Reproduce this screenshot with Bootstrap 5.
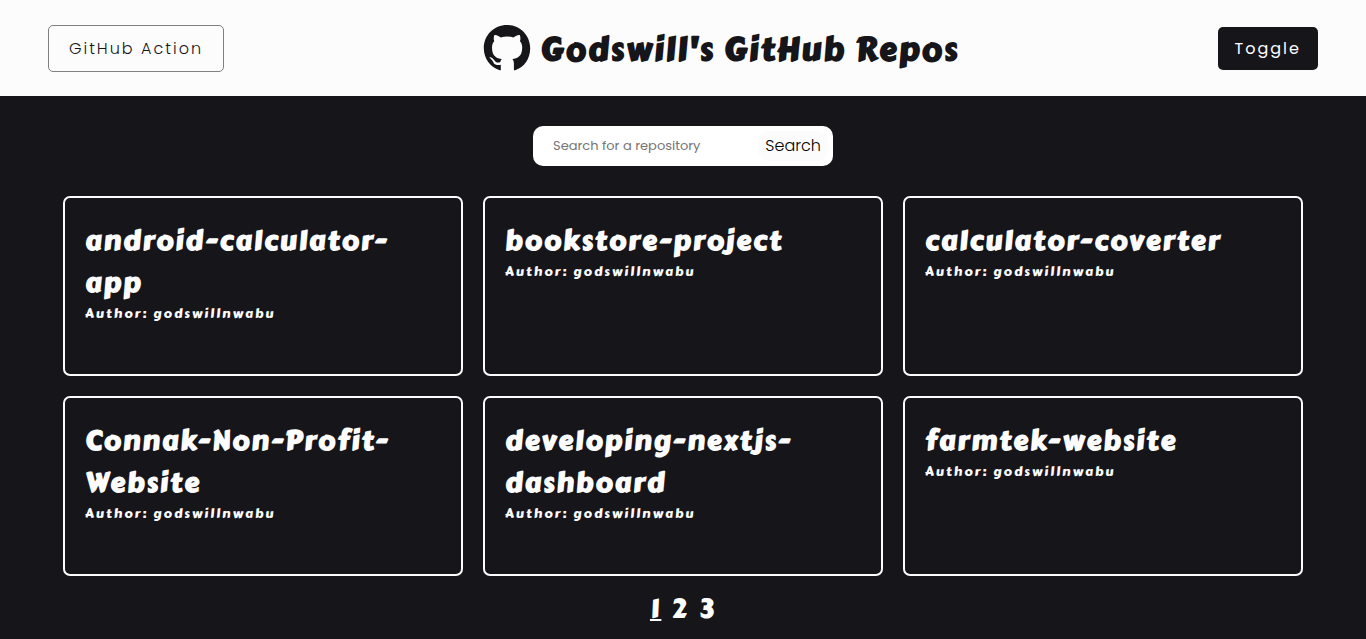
<!DOCTYPE html>
<html lang="en">
<head>
<meta charset="utf-8">
<meta name="viewport" content="width=device-width, initial-scale=1">
<title>Godswill's GitHub Repos</title>
<link href="https://cdn.jsdelivr.net/npm/bootstrap@5.3.0/dist/css/bootstrap.min.css" rel="stylesheet">
<style>
  :root { --ink: #16151a; --paper: #fcfcfc; --display: "Carter One", Lato, sans-serif; --text: Poppins, Inter, sans-serif; }
  body { background: var(--ink); color: var(--paper); font-family: var(--text); font-weight: 300; }
  .site-header { background: var(--paper); color: var(--ink); min-height: 96px; }
  .site-header .btn { font-size: 16px; line-height: 25px; letter-spacing: 2px; border-radius: 5px; }
  .btn-action { padding: 10px 20px; color: var(--ink); border: 1px solid #808080; font-weight: 300; }
  .btn-toggle { padding: 8px 16px; color: var(--paper); background: var(--ink); font-weight: 400; }
  .site-title, .repo-name, .repo-author, .pager { font-family: var(--display); letter-spacing: 2px; }
  .site-title { font-size: 32px; line-height: 48px; font-weight: 700; }
  .search-form { width: 300px; height: 40px; padding: 5px; background: #fff; border-radius: 10px; }
  .search-form input { font-size: 13px; font-weight: 400; padding: 0 15px; min-width: 0; background: transparent; }
  .search-form input::placeholder { color: #757575; }
  .search-form .btn { font-size: 16px; line-height: 20px; font-weight: 300; padding: 4px 6px; background: var(--paper); color: #000; border-radius: 10px; }
  .page-body { padding: 30px 0 12px; }
  .repo-grid { display: grid; grid-template-columns: repeat(auto-fit, minmax(300px, 1fr)); gap: 20px; max-width: 1240px; margin: 30px auto 12px; }
  .repo { min-height: 180px; padding: 22px 20px 20px; background: transparent; color: inherit; border: 2px solid var(--paper); border-radius: 7px; }
  .repo-name { font-size: 27px; line-height: 42px; font-weight: 700; }
  .repo-author { font-size: 13px; line-height: 20px; font-weight: 400; }
  .pager { font-size: 28px; line-height: 42px; gap: 10px; }
  .pager a { color: inherit; text-decoration: none; }
  .pager .current { text-decoration: underline; text-decoration-thickness: 2px; }
</style>
</head>
<body>
<header class="site-header d-flex flex-wrap align-items-center justify-content-between gap-3 px-5">
  <button type="button" class="btn btn-action">GitHub Action</button>
  <div class="d-flex align-items-center gap-2">
    <svg width="50" height="48" viewBox="0 0 50 48" fill="currentColor" aria-hidden="true"><path d="M25 1C12 1 1.800 11.200 1.800 24.200c0 10.300 6.600 18.900 15.800 22 .5.1.9.1 1.200-.1v-5.300c-6.400 1.400-7.400-2.500-7.400-2.500-1-2.700-4-4.600-4-4.600.5-.8 2.600-.8 5.100 2.700 2.100 3 4.300 2.200 5.900 1.600.2-1.500.8-2.500 1.500-3.100-5.200-.6-9.900-2.600-9.900-11.500 0-2.500.7-4.600 2.200-6.200-.3-.9-.9-3.400.2-6.200 0 0 2.300-.2 6.400 2.400a24 24 0 0 1 12.600 0c4.100-2.600 6.400-2.400 6.400-2.400 1.100 2.800.5 5.300.2 6.200 1.500 1.600 2.200 3.700 2.200 6.200 0 8.900-4.700 10.900-9.900 11.500.9.800 1.600 2.300 1.600 4.500v6.700c.3.200.8.200 1.300.1 9.200-3.100 15-11.700 15-22C48.200 11.200 38 1 25 1z"/></svg>
    <h1 class="site-title m-0 pt-1">Godswill's GitHub Repos</h1>
  </div>
  <button type="button" class="btn btn-toggle">Toggle</button>
</header>
<main class="page-body container-fluid">
  <form class="search-form d-flex mx-auto">
    <input type="text" class="form-control border-0 shadow-none" placeholder="Search for a repository" aria-label="Search for a repository">
    <button type="submit" class="btn">Search</button>
  </form>
  <section class="repo-grid">
    <article class="repo card"><h2 class="repo-name m-0">android-calculator-app</h2><p class="repo-author m-0">Author: godswillnwabu</p></article>
    <article class="repo card"><h2 class="repo-name m-0">bookstore-project</h2><p class="repo-author m-0">Author: godswillnwabu</p></article>
    <article class="repo card"><h2 class="repo-name m-0">calculator-coverter</h2><p class="repo-author m-0">Author: godswillnwabu</p></article>
    <article class="repo card"><h2 class="repo-name m-0">Connak-Non-Profit-Website</h2><p class="repo-author m-0">Author: godswillnwabu</p></article>
    <article class="repo card"><h2 class="repo-name m-0">developing-nextjs-dashboard</h2><p class="repo-author m-0">Author: godswillnwabu</p></article>
    <article class="repo card"><h2 class="repo-name m-0">farmtek-website</h2><p class="repo-author m-0">Author: godswillnwabu</p></article>
  </section>
  <nav class="pager d-flex justify-content-center" aria-label="Pages">
    <a href="#1" class="current" aria-current="page">1</a><a href="#2">2</a><a href="#3">3</a>
  </nav>
</main>
</body>
</html>
